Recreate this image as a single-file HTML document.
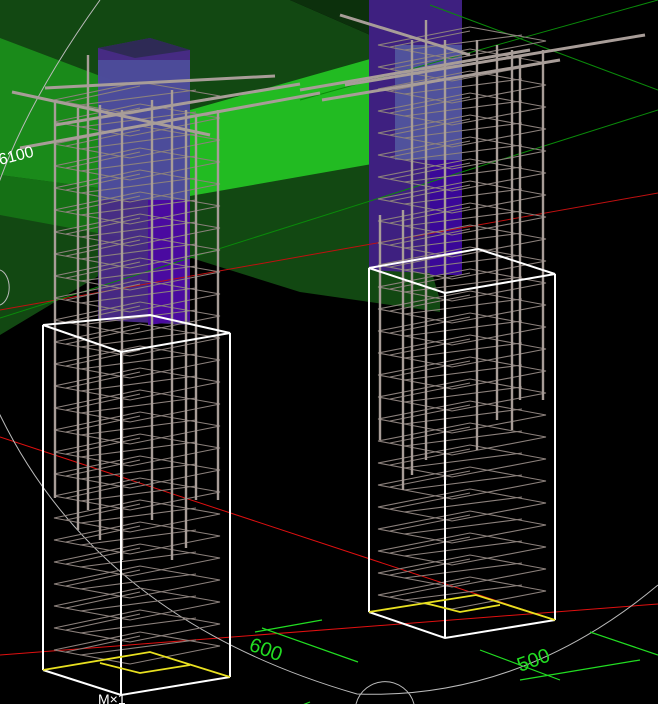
<!DOCTYPE html>
<html><head><style>html,body{margin:0;padding:0;background:#000;overflow:hidden}svg{display:block}</style></head>
<body>
<svg width="658" height="704" viewBox="0 0 658 704" xmlns="http://www.w3.org/2000/svg">
<defs>
<path id="sl" d="M54 0 L130 14 L220 -4 L140 -18 Z M66 2 L140 -14 M80 5 L196 -10" fill="none" stroke="#8c817c" stroke-width="1.1"/>
<path id="sr" d="M378 0 L452 14 L546 -4 L470 -18 Z M390 2 L470 -14 M404 5 L522 -10" fill="none" stroke="#8c817c" stroke-width="1.1"/>
</defs>
<rect width="658" height="704" fill="#000"/>
<polygon points="0,0 290,0 400,48 400,165 440,300 440,312 300,292 150,245 0,335" fill="#124812"/>
<polygon points="290,0 460,0 460,20 400,48" fill="#0c300c"/>
<polygon points="0,38 190,110 190,200 0,175" fill="#1a8a1a"/>
<polygon points="0,175 190,200 190,250 0,215" fill="#157015"/>
<polygon points="190,110 395,52 395,160 190,196" fill="#22bb22"/>
<polygon points="98,48 150,38 190,50 190,325 98,320" fill="#4a2a8a" opacity="0.95"/>
<polygon points="98,48 150,38 190,50 135,58" fill="#2e2a55"/>
<polygon points="98,60 190,60 190,200 98,200" fill="#5060a8" opacity="0.6"/>
<polygon points="148,200 190,200 190,320 148,325" fill="#4a0aa0"/>
<polygon points="369,0 462,0 462,275 369,270" fill="#3e2080"/>
<polygon points="395,45 462,45 462,160 395,160" fill="#5868a8" opacity="0.7"/>
<polygon points="430,160 462,160 462,275 430,275" fill="#3a0898"/>
<g fill="none" stroke-width="1">
<line x1="0" y1="437" x2="555" y2="620" stroke="#e01010"/>
<line x1="0" y1="655" x2="658" y2="604" stroke="#e01010"/>
<line x1="0" y1="310" x2="658" y2="193" stroke="#c01010"/>
<line x1="0" y1="318" x2="658" y2="110" stroke="#0a8a0a"/>
<line x1="300" y1="100" x2="658" y2="0" stroke="#0a8a0a"/>
<line x1="430" y1="5" x2="658" y2="90" stroke="#0a8a0a"/>
<path d="M100 0 Q-80 250 0 415 Q100 620 357 694 Q520 700 658 585" stroke="#bbbbbb"/>
<path d="M356 704 A30 30 0 0 1 414 704" stroke="#bbbbbb"/>
<path d="M0 270 A12 18 0 0 1 0 305" stroke="#bbbbbb"/>
</g>
<g>
<use href="#sl" y="100"/><use href="#sl" y="122"/><use href="#sl" y="144"/><use href="#sl" y="166"/><use href="#sl" y="188"/><use href="#sl" y="210"/><use href="#sl" y="232"/><use href="#sl" y="254"/><use href="#sl" y="276"/><use href="#sl" y="298"/><use href="#sl" y="320"/><use href="#sl" y="342"/><use href="#sl" y="364"/><use href="#sl" y="386"/><use href="#sl" y="408"/><use href="#sl" y="430"/><use href="#sl" y="452"/><use href="#sl" y="474"/><use href="#sl" y="496"/><use href="#sl" y="518"/><use href="#sl" y="540"/><use href="#sl" y="562"/><use href="#sl" y="584"/><use href="#sl" y="606"/><use href="#sl" y="628"/><use href="#sl" y="650"/>
<use href="#sr" y="45"/><use href="#sr" y="67"/><use href="#sr" y="89"/><use href="#sr" y="111"/><use href="#sr" y="133"/><use href="#sr" y="155"/><use href="#sr" y="177"/><use href="#sr" y="199"/><use href="#sr" y="221"/><use href="#sr" y="243"/><use href="#sr" y="265"/><use href="#sr" y="287"/><use href="#sr" y="309"/><use href="#sr" y="331"/><use href="#sr" y="353"/><use href="#sr" y="375"/><use href="#sr" y="397"/><use href="#sr" y="419"/><use href="#sr" y="441"/><use href="#sr" y="463"/><use href="#sr" y="485"/><use href="#sr" y="507"/><use href="#sr" y="529"/><use href="#sr" y="551"/><use href="#sr" y="573"/><use href="#sr" y="595"/>
</g>
<g stroke="#a89d98" stroke-width="2.4">
<line x1="55" y1="100" x2="55" y2="498"/><line x1="78" y1="108" x2="78" y2="530"/><line x1="88" y1="55" x2="88" y2="510"/><line x1="100" y1="105" x2="100" y2="540"/><line x1="122" y1="110" x2="122" y2="560"/><line x1="152" y1="100" x2="152" y2="520"/><line x1="172" y1="90" x2="172" y2="560"/><line x1="186" y1="110" x2="186" y2="548"/><line x1="196" y1="115" x2="196" y2="500"/><line x1="218" y1="110" x2="218" y2="500"/>
<line x1="380" y1="215" x2="380" y2="440"/><line x1="403" y1="210" x2="403" y2="490"/><line x1="412" y1="40" x2="412" y2="475"/><line x1="426" y1="20" x2="426" y2="460"/><line x1="445" y1="40" x2="445" y2="480"/><line x1="477" y1="40" x2="477" y2="450"/><line x1="497" y1="45" x2="497" y2="420"/><line x1="512" y1="50" x2="512" y2="430"/><line x1="520" y1="55" x2="520" y2="400"/><line x1="543" y1="50" x2="543" y2="400"/>
</g>
<g stroke="#a89d98" stroke-width="3">
<line x1="20" y1="148" x2="320" y2="93"/><line x1="45" y1="88" x2="275" y2="76"/><line x1="12" y1="92" x2="210" y2="135"/><line x1="55" y1="125" x2="300" y2="84"/><line x1="345" y1="85" x2="645" y2="35"/><line x1="322" y1="100" x2="560" y2="60"/><line x1="340" y1="15" x2="470" y2="55"/><line x1="300" y1="90" x2="530" y2="50"/>
</g>
<g fill="none" stroke="#fff" stroke-width="2">
<path d="M43 325 L121 352 L230 333 L150 315 Z M43 325 V670 M121 352 V695 M230 333 V677"/>
<path d="M43 670 L121 695 L230 677"/>
<path d="M369 268 L445 293 L555 274 L478 249 Z M369 268 V612 M445 293 V638 M555 274 V620"/>
<path d="M369 612 L445 638 L555 620"/>
</g>
<g fill="none" stroke="#e8e020" stroke-width="1.8">
<path d="M43 670 L150 652 L230 677 M100 663 L140 673 L190 665"/>
<path d="M369 612 L476 595 L555 620 M425 603 L460 612 L500 605"/>
</g>
<g stroke="#22dd22" stroke-width="1.2" fill="none">
<line x1="255" y1="632" x2="322" y2="620"/><line x1="262" y1="628" x2="358" y2="662"/><line x1="265" y1="720" x2="310" y2="702"/>
<line x1="480" y1="650" x2="560" y2="680"/><line x1="520" y1="680" x2="640" y2="660"/><line x1="590" y1="632" x2="658" y2="655"/>
</g>
<text x="0" y="0" transform="translate(248,650) rotate(20)" fill="#22dd22" font-family="Liberation Sans, sans-serif" font-size="20">600</text>
<text x="0" y="0" transform="translate(520,672) rotate(-20)" fill="#22dd22" font-family="Liberation Sans, sans-serif" font-size="20">500</text>
<text x="0" y="0" transform="translate(0,165) rotate(-14)" fill="#fff" font-family="Liberation Sans, sans-serif" font-size="16">6100</text>
<text x="98" y="704" fill="#fff" font-family="Liberation Sans, sans-serif" font-size="14">M&#215;1</text>
</svg>
</body></html>
